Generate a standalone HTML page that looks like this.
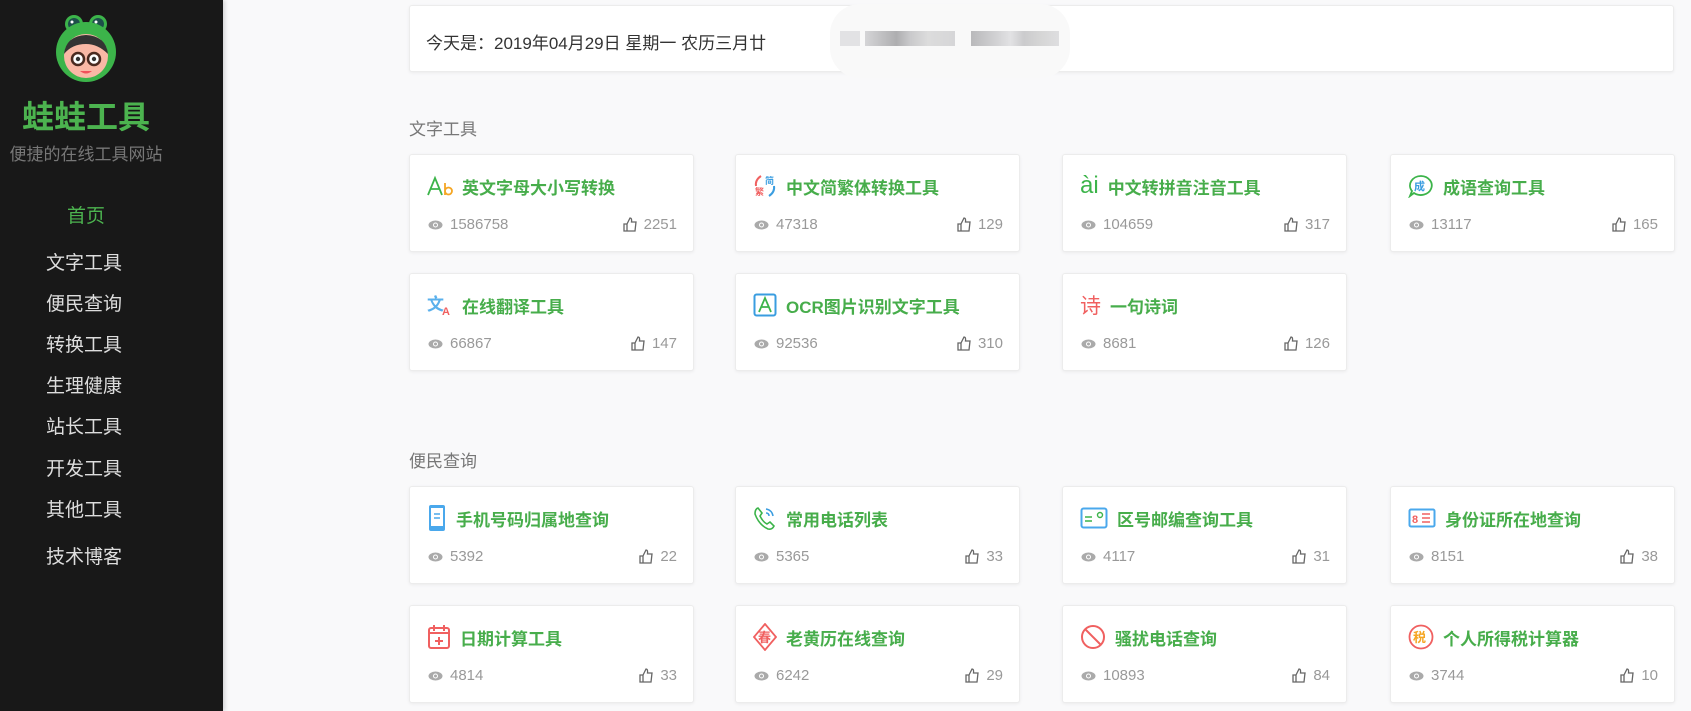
<!DOCTYPE html>
<html><head><meta charset="utf-8"><style>
*{margin:0;padding:0;box-sizing:border-box}
body{width:1691px;height:711px;overflow:hidden;background:#f9f9fa;font-family:"Liberation Sans","Noto Sans CJK SC",sans-serif;position:relative}
#side{position:absolute;left:0;top:0;width:223px;height:711px;background:#181818;box-shadow:2px 0 4px rgba(0,0,0,.15)}
.brand{position:absolute;left:0;width:172px;text-align:center;white-space:nowrap}
.nav{position:absolute;left:46px;color:#ddd;font-size:19px}
.card{position:absolute;background:#fff;border:1px solid #ececec;border-radius:3px;box-shadow:0 1px 3px rgba(0,0,0,.06);width:285px;height:98px}
.t{position:absolute;left:17px;top:18px;height:26px;display:flex;align-items:center;color:#47ad4b;font-weight:bold;font-size:17px}
.t svg{margin-right:9px;flex:none}
.s{position:absolute;left:18px;right:16px;top:61px;display:flex;justify-content:space-between;color:#999;font-size:15px;align-items:center}
.s span{display:flex;align-items:center}
.s svg{margin-right:7px}
.h{position:absolute;left:409px;color:#777;font-size:17px}
</style></head><body>
<div id="side">
<svg style="position:absolute;left:54px;top:14px" width="64" height="68" viewBox="0 0 64 68">
<circle cx="20" cy="10" r="9" fill="#3cb44a"/><circle cx="44" cy="10" r="9" fill="#3cb44a"/>
<circle cx="20" cy="10" r="6" fill="#1d4f4a"/><circle cx="44" cy="10" r="6" fill="#1d4f4a"/>
<circle cx="18" cy="8" r="1.5" fill="#fff"/><circle cx="42" cy="8" r="1.5" fill="#fff"/>
<ellipse cx="32" cy="38" rx="30" ry="30" fill="#3cb44a"/>
<ellipse cx="32" cy="42" rx="22" ry="22" fill="#f9b8a5"/>
<path d="M10 40 Q12 22 32 21 Q52 22 54 40 Q44 30 32 30 Q18 30 10 40Z" fill="#333"/>
<circle cx="24" cy="45" r="6" fill="#fff" stroke="#4a2a20" stroke-width="2.5"/><circle cx="40" cy="45" r="6" fill="#fff" stroke="#4a2a20" stroke-width="2.5"/>
<circle cx="24" cy="45" r="2.2" fill="#333"/><circle cx="40" cy="45" r="2.2" fill="#333"/>
<path d="M26 57 Q32 62 38 57Z" fill="#f0505a"/>
</svg>
<div class="brand" style="top:92px;color:#4cb34f;font-size:32px;font-weight:bold">蛙蛙工具</div>
<div class="brand" style="top:140px;color:#777;font-size:17px">便捷的在线工具网站</div>
<div class="brand" style="top:201px;color:#4cb34f;font-size:19px">首页</div>
<div class="nav" style="top:248px">文字工具</div>
<div class="nav" style="top:289px">便民查询</div>
<div class="nav" style="top:330px">转换工具</div>
<div class="nav" style="top:371px">生理健康</div>
<div class="nav" style="top:412px">站长工具</div>
<div class="nav" style="top:454px">开发工具</div>
<div class="nav" style="top:495px">其他工具</div>
<div class="nav" style="top:542px">技术博客</div>
</div>

<div class="card" style="left:409px;top:5px;width:1265px;height:67px">
<div style="position:absolute;left:16px;top:23px;font-size:17px;color:#333">今天是：2019年04月29日 星期一 农历三月廿</div>
<div style="position:absolute;left:420px;top:-2px;width:240px;height:74px;background:#f9f9f9;border-radius:30px"></div>
<div style="position:absolute;left:430px;top:25px;width:20px;height:15px;background:#e2e2e4"></div>
<div style="position:absolute;left:455px;top:25px;width:90px;height:15px;background:linear-gradient(90deg,#d5d5d7,#aeaeb0 35%,#c9c9cb 50%,#dcdcdc 70%,#d6d6d8)"></div>
<div style="position:absolute;left:561px;top:25px;width:88px;height:15px;background:linear-gradient(90deg,#b9b9bb,#d3d3d5 30%,#e2e2e4 45%,#cbcbcd 60%,#d6d6d6 80%,#dedee0)"></div>
</div>

<div class="h" style="top:115px">文字工具</div>
<div class="h" style="top:447px">便民查询</div>

<!-- row1 -->
<div class="card" style="left:409px;top:154px"><div class="t"><svg width="26" height="22" viewBox="0 0 26 22"><path d="M1 20 L8 3 L15 20 M4 14 H12" stroke="#3cb44a" stroke-width="1.8" fill="none"/><path d="M18 8 V20 M18 16 a3.5 3.5 0 1 0 7 0 a3.5 3.5 0 1 0 -7 0" stroke="#f5a623" stroke-width="1.8" fill="none"/></svg>英文字母大小写转换</div><div class="s"><span><svg width="15" height="10"><ellipse cx="7.5" cy="5" rx="7" ry="4.5" fill="#aaa"/><circle cx="7.5" cy="5" r="2.5" fill="#fff"/><circle cx="7.5" cy="5" r="1.5" fill="#aaa"/></svg>1586758</span><span><svg width="14" height="15" viewBox="0 0 14 15"><path d="M1 7h3v7H1z M4 7 L7 1 Q9 1 8.5 5 H13 L12 14 H4" stroke="#666" stroke-width="1.3" fill="none"/></svg>2251</span></div></div>
<div class="card" style="left:735px;top:154px"><div class="t"><svg width="24" height="24" viewBox="0 0 24 24"><path d="M8 2 Q2 6 3 12" stroke="#f06060" stroke-width="2" fill="none"/><path d="M16 22 Q22 18 21 12" stroke="#3a9de0" stroke-width="2" fill="none"/><text x="12" y="10" font-size="9" fill="#3a9de0" font-family="Noto Sans CJK SC">简</text><text x="2" y="21" font-size="9" fill="#f06060" font-family="Noto Sans CJK SC">繁</text></svg>中文简繁体转换工具</div><div class="s"><span><svg width="15" height="10"><ellipse cx="7.5" cy="5" rx="7" ry="4.5" fill="#aaa"/><circle cx="7.5" cy="5" r="2.5" fill="#fff"/><circle cx="7.5" cy="5" r="1.5" fill="#aaa"/></svg>47318</span><span><svg width="14" height="15" viewBox="0 0 14 15"><path d="M1 7h3v7H1z M4 7 L7 1 Q9 1 8.5 5 H13 L12 14 H4" stroke="#666" stroke-width="1.3" fill="none"/></svg>129</span></div></div>
<div class="card" style="left:1062px;top:154px"><div class="t"><span style="color:#3cb44a;font-weight:normal;font-size:24px;margin-right:9px;line-height:1">ài</span>中文转拼音注音工具</div><div class="s"><span><svg width="15" height="10"><ellipse cx="7.5" cy="5" rx="7" ry="4.5" fill="#aaa"/><circle cx="7.5" cy="5" r="2.5" fill="#fff"/><circle cx="7.5" cy="5" r="1.5" fill="#aaa"/></svg>104659</span><span><svg width="14" height="15" viewBox="0 0 14 15"><path d="M1 7h3v7H1z M4 7 L7 1 Q9 1 8.5 5 H13 L12 14 H4" stroke="#666" stroke-width="1.3" fill="none"/></svg>317</span></div></div>
<div class="card" style="left:1390px;top:154px"><div class="t"><svg width="26" height="24" viewBox="0 0 26 24"><path d="M13 2 a11 9.5 0 1 1 -7 17 L2 22 L4 17 A11 9.5 0 0 1 13 2Z" stroke="#3cb44a" stroke-width="1.8" fill="none"/><text x="6" y="16" font-size="11" fill="#3a9de0" font-weight="bold" font-family="Noto Sans CJK SC">成</text></svg>成语查询工具</div><div class="s"><span><svg width="15" height="10"><ellipse cx="7.5" cy="5" rx="7" ry="4.5" fill="#aaa"/><circle cx="7.5" cy="5" r="2.5" fill="#fff"/><circle cx="7.5" cy="5" r="1.5" fill="#aaa"/></svg>13117</span><span><svg width="14" height="15" viewBox="0 0 14 15"><path d="M1 7h3v7H1z M4 7 L7 1 Q9 1 8.5 5 H13 L12 14 H4" stroke="#666" stroke-width="1.3" fill="none"/></svg>165</span></div></div>
<!-- row2 -->
<div class="card" style="left:409px;top:273px"><div class="t"><svg width="26" height="22" viewBox="0 0 26 22"><text x="0" y="16" font-size="17" fill="#5ab0ec" font-family="Noto Sans CJK SC">文</text><text x="15" y="21" font-size="11" fill="#f06060" font-family="Liberation Sans">A</text></svg>在线翻译工具</div><div class="s"><span><svg width="15" height="10"><ellipse cx="7.5" cy="5" rx="7" ry="4.5" fill="#aaa"/><circle cx="7.5" cy="5" r="2.5" fill="#fff"/><circle cx="7.5" cy="5" r="1.5" fill="#aaa"/></svg>66867</span><span><svg width="14" height="15" viewBox="0 0 14 15"><path d="M1 7h3v7H1z M4 7 L7 1 Q9 1 8.5 5 H13 L12 14 H4" stroke="#666" stroke-width="1.3" fill="none"/></svg>147</span></div></div>
<div class="card" style="left:735px;top:273px"><div class="t"><svg width="24" height="24" viewBox="0 0 24 24"><rect x="1.5" y="1.5" width="21" height="21" rx="2" stroke="#3a9de0" stroke-width="2" fill="none"/><path d="M6 19 L12 5 L18 19 M8.5 14 H15.5" stroke="#3cb44a" stroke-width="1.8" fill="none"/></svg>OCR图片识别文字工具</div><div class="s"><span><svg width="15" height="10"><ellipse cx="7.5" cy="5" rx="7" ry="4.5" fill="#aaa"/><circle cx="7.5" cy="5" r="2.5" fill="#fff"/><circle cx="7.5" cy="5" r="1.5" fill="#aaa"/></svg>92536</span><span><svg width="14" height="15" viewBox="0 0 14 15"><path d="M1 7h3v7H1z M4 7 L7 1 Q9 1 8.5 5 H13 L12 14 H4" stroke="#666" stroke-width="1.3" fill="none"/></svg>310</span></div></div>
<div class="card" style="left:1062px;top:273px"><div class="t"><span style="color:#f06060;font-weight:normal;font-size:21px;margin-right:9px">诗</span>一句诗词</div><div class="s"><span><svg width="15" height="10"><ellipse cx="7.5" cy="5" rx="7" ry="4.5" fill="#aaa"/><circle cx="7.5" cy="5" r="2.5" fill="#fff"/><circle cx="7.5" cy="5" r="1.5" fill="#aaa"/></svg>8681</span><span><svg width="14" height="15" viewBox="0 0 14 15"><path d="M1 7h3v7H1z M4 7 L7 1 Q9 1 8.5 5 H13 L12 14 H4" stroke="#666" stroke-width="1.3" fill="none"/></svg>126</span></div></div>
<!-- row3 -->
<div class="card" style="left:409px;top:486px"><div class="t"><svg width="20" height="28" viewBox="0 0 20 28"><rect x="2" y="1" width="16" height="26" rx="2" fill="#4aa8ec"/><rect x="4" y="4" width="12" height="18" fill="#fff"/><path d="M7 10h6M7 14h6" stroke="#4aa8ec" stroke-width="1.5"/></svg>手机号码归属地查询</div><div class="s"><span><svg width="15" height="10"><ellipse cx="7.5" cy="5" rx="7" ry="4.5" fill="#aaa"/><circle cx="7.5" cy="5" r="2.5" fill="#fff"/><circle cx="7.5" cy="5" r="1.5" fill="#aaa"/></svg>5392</span><span><svg width="14" height="15" viewBox="0 0 14 15"><path d="M1 7h3v7H1z M4 7 L7 1 Q9 1 8.5 5 H13 L12 14 H4" stroke="#666" stroke-width="1.3" fill="none"/></svg>22</span></div></div>
<div class="card" style="left:735px;top:486px"><div class="t"><svg width="24" height="26" viewBox="0 0 24 26"><path d="M5 3 L9 8 L7 11 Q10 17 14 19 L17 17 L21 21 Q19 25 15 24 Q6 20 2 9 Q2 4 5 3Z" stroke="#3cb44a" stroke-width="1.6" fill="none"/><path d="M13 4 Q19 5 20 11 M13 8 Q16 8 16 11" stroke="#3a9de0" stroke-width="1.5" fill="none"/></svg>常用电话列表</div><div class="s"><span><svg width="15" height="10"><ellipse cx="7.5" cy="5" rx="7" ry="4.5" fill="#aaa"/><circle cx="7.5" cy="5" r="2.5" fill="#fff"/><circle cx="7.5" cy="5" r="1.5" fill="#aaa"/></svg>5365</span><span><svg width="14" height="15" viewBox="0 0 14 15"><path d="M1 7h3v7H1z M4 7 L7 1 Q9 1 8.5 5 H13 L12 14 H4" stroke="#666" stroke-width="1.3" fill="none"/></svg>33</span></div></div>
<div class="card" style="left:1062px;top:486px"><div class="t"><svg width="28" height="22" viewBox="0 0 28 22"><rect x="1.5" y="1.5" width="25" height="19" rx="2" stroke="#4aa8ec" stroke-width="2" fill="none"/><path d="M5 10h7M5 14h7" stroke="#3cb44a" stroke-width="1.6"/><circle cx="20" cy="8" r="2.5" stroke="#3cb44a" stroke-width="1.4" fill="none"/></svg>区号邮编查询工具</div><div class="s"><span><svg width="15" height="10"><ellipse cx="7.5" cy="5" rx="7" ry="4.5" fill="#aaa"/><circle cx="7.5" cy="5" r="2.5" fill="#fff"/><circle cx="7.5" cy="5" r="1.5" fill="#aaa"/></svg>4117</span><span><svg width="14" height="15" viewBox="0 0 14 15"><path d="M1 7h3v7H1z M4 7 L7 1 Q9 1 8.5 5 H13 L12 14 H4" stroke="#666" stroke-width="1.3" fill="none"/></svg>31</span></div></div>
<div class="card" style="left:1390px;top:486px"><div class="t"><svg width="28" height="20" viewBox="0 0 28 20"><rect x="1.5" y="1.5" width="25" height="17" rx="1.5" stroke="#4aa8ec" stroke-width="2" fill="none"/><text x="4" y="15" font-size="11" fill="#f06060" font-weight="bold" font-family="Liberation Sans">8</text><path d="M14 6h8M14 10h8M14 14h8" stroke="#f06060" stroke-width="1.5"/></svg>身份证所在地查询</div><div class="s"><span><svg width="15" height="10"><ellipse cx="7.5" cy="5" rx="7" ry="4.5" fill="#aaa"/><circle cx="7.5" cy="5" r="2.5" fill="#fff"/><circle cx="7.5" cy="5" r="1.5" fill="#aaa"/></svg>8151</span><span><svg width="14" height="15" viewBox="0 0 14 15"><path d="M1 7h3v7H1z M4 7 L7 1 Q9 1 8.5 5 H13 L12 14 H4" stroke="#666" stroke-width="1.3" fill="none"/></svg>38</span></div></div>
<!-- row4 -->
<div class="card" style="left:409px;top:605px"><div class="t"><svg width="24" height="26" viewBox="0 0 24 26"><rect x="2" y="4" width="20" height="20" rx="2" stroke="#f06060" stroke-width="2" fill="none"/><path d="M2 9h20M7 1v6M17 1v6M12 13v8M8 17h8" stroke="#f06060" stroke-width="2"/></svg>日期计算工具</div><div class="s"><span><svg width="15" height="10"><ellipse cx="7.5" cy="5" rx="7" ry="4.5" fill="#aaa"/><circle cx="7.5" cy="5" r="2.5" fill="#fff"/><circle cx="7.5" cy="5" r="1.5" fill="#aaa"/></svg>4814</span><span><svg width="14" height="15" viewBox="0 0 14 15"><path d="M1 7h3v7H1z M4 7 L7 1 Q9 1 8.5 5 H13 L12 14 H4" stroke="#666" stroke-width="1.3" fill="none"/></svg>33</span></div></div>
<div class="card" style="left:735px;top:605px"><div class="t"><svg width="24" height="28" viewBox="0 0 24 28"><path d="M12 1 L23 14 L12 27 L1 14Z" stroke="#f06060" stroke-width="1.8" fill="none"/><text x="5" y="19" font-size="13" fill="#f06060" font-family="Noto Sans CJK SC">春</text></svg>老黄历在线查询</div><div class="s"><span><svg width="15" height="10"><ellipse cx="7.5" cy="5" rx="7" ry="4.5" fill="#aaa"/><circle cx="7.5" cy="5" r="2.5" fill="#fff"/><circle cx="7.5" cy="5" r="1.5" fill="#aaa"/></svg>6242</span><span><svg width="14" height="15" viewBox="0 0 14 15"><path d="M1 7h3v7H1z M4 7 L7 1 Q9 1 8.5 5 H13 L12 14 H4" stroke="#666" stroke-width="1.3" fill="none"/></svg>29</span></div></div>
<div class="card" style="left:1062px;top:605px"><div class="t"><svg width="26" height="26" viewBox="0 0 26 26"><circle cx="13" cy="13" r="11" stroke="#f06060" stroke-width="2" fill="none"/><path d="M5.5 5.5 L20.5 20.5" stroke="#f06060" stroke-width="2"/></svg>骚扰电话查询</div><div class="s"><span><svg width="15" height="10"><ellipse cx="7.5" cy="5" rx="7" ry="4.5" fill="#aaa"/><circle cx="7.5" cy="5" r="2.5" fill="#fff"/><circle cx="7.5" cy="5" r="1.5" fill="#aaa"/></svg>10893</span><span><svg width="14" height="15" viewBox="0 0 14 15"><path d="M1 7h3v7H1z M4 7 L7 1 Q9 1 8.5 5 H13 L12 14 H4" stroke="#666" stroke-width="1.3" fill="none"/></svg>84</span></div></div>
<div class="card" style="left:1390px;top:605px"><div class="t"><svg width="26" height="26" viewBox="0 0 26 26"><circle cx="13" cy="13" r="11.5" stroke="#f06060" stroke-width="1.8" fill="none"/><text x="5" y="18" font-size="13" fill="#f5a623" font-weight="bold" font-family="Noto Sans CJK SC">税</text></svg>个人所得税计算器</div><div class="s"><span><svg width="15" height="10"><ellipse cx="7.5" cy="5" rx="7" ry="4.5" fill="#aaa"/><circle cx="7.5" cy="5" r="2.5" fill="#fff"/><circle cx="7.5" cy="5" r="1.5" fill="#aaa"/></svg>3744</span><span><svg width="14" height="15" viewBox="0 0 14 15"><path d="M1 7h3v7H1z M4 7 L7 1 Q9 1 8.5 5 H13 L12 14 H4" stroke="#666" stroke-width="1.3" fill="none"/></svg>10</span></div></div>
</body></html>
